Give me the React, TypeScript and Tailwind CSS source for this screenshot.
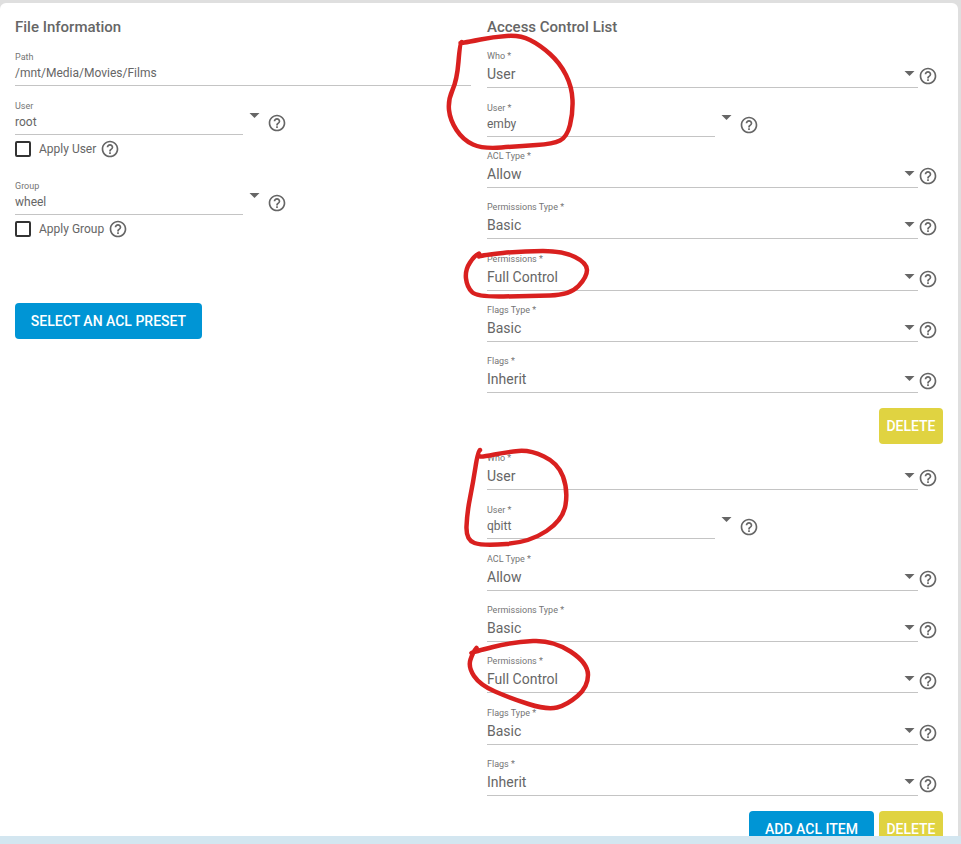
const font = { fontFamily: "Roboto, sans-serif" };

function smooth(points: number[][]) {
    let d = `M${(points[0][0] + points[1][0]) / 2} ${(points[0][1] + points[1][1]) / 2}`;
    for (let i = 1; i < points.length - 1; i++) {
        const [x, y] = points[i];
        const [nx, ny] = points[i + 1];
        d += ` Q${x} ${y} ${(x + nx) / 2} ${(y + ny) / 2}`;
    }
    return d;
}

const scribbles = [
    [[460, 43], [461, 43], [468, 42], [493, 37], [520, 35], [540, 45], [560, 63], [572, 87], [573, 113], [567, 137], [553, 144], [520, 146], [483, 149], [463, 140], [450, 120], [448, 100], [457, 80], [460, 43], [463, 41]],
    [[483, 252], [475, 255], [465, 270], [467, 287], [477, 297], [530, 296], [570, 295], [587, 277], [587, 263], [563, 251], [523, 251], [483, 255], [475, 258]],
    [[482, 449], [478, 451], [473, 483], [467, 513], [466, 540], [483, 546], [530, 542], [563, 520], [568, 490], [558, 463], [530, 450], [507, 452], [482, 457], [479, 456]],
    [[480, 644], [473, 652], [468, 667], [480, 685], [510, 698], [547, 710], [567, 705], [588, 687], [588, 663], [553, 640], [513, 642], [473, 652], [470, 654]],
];

function HelpIcon() {
    return (
        <svg viewBox="0 0 24 24" className="h-5 w-5 shrink-0 fill-[#666]">
            <path d="M11 18h2v-2h-2v2zm1-16C6.48 2 2 6.48 2 12s4.48 10 10 10 10-4.48 10-10S17.52 2 12 2zm0 18c-4.41 0-8-3.59-8-8s3.59-8 8-8 8 3.59 8 8-3.59 8-8 8zm0-14c-2.21 0-4 1.79-4 4h2c0-1.1.9-2 2-2s2 .9 2 2c0 2-3 1.75-3 5h2c0-2.25 3-2.5 3-5 0-2.21-1.79-4-4-4z" />
        </svg>
    );
}

function Caret() {
    return (
        <svg viewBox="0 0 12 6" className="h-[5px] w-[11px] shrink-0 fill-[#666]">
            <path d="M0 0h12L6 6z" />
        </svg>
    );
}

function FullSelect({ label, value }: { label: string; value: string }) {
    return (
        <div className="flex h-[51.33px] items-end">
            <div className="flex w-[431px] items-center justify-between border-b border-[#c4c4c4] pb-[4px] pr-[3px]">
                <div>
                    <div className="text-[9px] leading-[12px] text-[#757575]">{label}</div>
                    <div className="mt-[3px] text-sm leading-[18px] text-[#666]">{value}</div>
                </div>
                <div className="mt-[14px]"><Caret /></div>
            </div>
            <div className="mb-[2px]"><HelpIcon /></div>
        </div>
    );
}

function ShortSelect({ label, value, height }: { label: string; value: string; height: string }) {
    return (
        <div className={`flex items-end ${height}`}>
            <div className="w-[228px] border-b border-[#c4c4c4] pb-[3px]">
                <div className="text-[9px] leading-[12px] text-[#757575]">{label}</div>
                <div className="mt-[1px] text-xs leading-[18px] text-[#666]">{value}</div>
            </div>
            <div className="mb-[17px] ml-[6px]"><Caret /></div>
            <div className="mb-[2px] ml-[7px]"><HelpIcon /></div>
        </div>
    );
}

function AclEntry({ user }: { user: string }) {
    return (
        <>
            <FullSelect label="Who *" value="User" />
            <ShortSelect label="User *" value={user} height="h-[49px]" />
            <FullSelect label="ACL Type *" value="Allow" />
            <FullSelect label="Permissions Type *" value="Basic" />
            <FullSelect label="Permissions *" value="Full Control" />
            <FullSelect label="Flags Type *" value="Basic" />
            <FullSelect label="Flags *" value="Inherit" />
        </>
    );
}

function ApplyCheck({ label }: { label: string }) {
    return (
        <div className="mt-[4px] flex h-[20px] items-center">
            <div className="h-4 w-4 rounded-[2px] border-2 border-[#333]" />
            <span className="ml-2 text-xs text-[#666]">{label}</span>
            <div className="ml-[4px]"><HelpIcon /></div>
        </div>
    );
}

function Button({ label, className }: { label: string; className: string }) {
    return (
        <button type="button" className={`h-9 shrink-0 rounded-[4px] text-sm font-medium text-white ${className}`}>
            {label}
        </button>
    );
}

export default function App() {
    return (
        <div className="relative flex h-[844px] flex-col overflow-hidden bg-[#dfdfdf]" style={font}>
            <div className="mt-[3px] min-h-0 w-[958px] flex-1 overflow-hidden rounded-t-[6px] bg-white">
                <div className="flex gap-4 px-[15px] pt-[15px]">
                    <div className="w-[456px]">
                        <h2 className="text-[15px] font-medium leading-[18px] text-[#666]">File Information</h2>
                        <div className="mt-[15px] border-b border-[#c4c4c4] pb-[3px]">
                            <div className="text-[9px] leading-[12px] text-[#757575]">Path</div>
                            <div className="mt-[1px] text-xs leading-[18px] text-[#666]">/mnt/Media/Movies/Films</div>
                        </div>
                        <ShortSelect label="User" value="root" height="h-[49px]" />
                        <ApplyCheck label="Apply User" />
                        <ShortSelect label="Group" value="wheel" height="h-[56px]" />
                        <ApplyCheck label="Apply Group" />
                        <div className="mt-[64px]">
                            <Button label="SELECT AN ACL PRESET" className="w-[187px] bg-[#0095d5]" />
                        </div>
                    </div>
                    <div className="w-[456px]">
                        <h2 className="text-[15px] font-medium leading-[18px] text-[#666]">Access Control List</h2>
                        <div className="mt-[0.4px]">
                            <AclEntry user="emby" />
                        </div>
                        <div className="mt-[15px] flex h-9 justify-end">
                            <Button label="DELETE" className="w-16 bg-[#e0d341]" />
                        </div>
                        <div className="-mt-[5.4px]">
                            <AclEntry user="qbitt" />
                        </div>
                        <div className="mt-[15px] flex justify-end gap-[5px]">
                            <Button label="ADD ACL ITEM" className="w-[125px] bg-[#0095d5]" />
                            <Button label="DELETE" className="w-16 bg-[#e0d341]" />
                        </div>
                    </div>
                </div>
            </div>
            <div className="h-2 shrink-0 bg-[#d3e6f0]" />
            <svg className="pointer-events-none absolute left-0 top-0 h-[844px] w-[961px]" viewBox="0 0 961 844" fill="none">
                {scribbles.map((points, i) => (
                    <path key={i} d={smooth(points)} stroke="#d9201f" strokeWidth="4.5" strokeLinecap="round" strokeLinejoin="round" />
                ))}
            </svg>
        </div>
    );
}
